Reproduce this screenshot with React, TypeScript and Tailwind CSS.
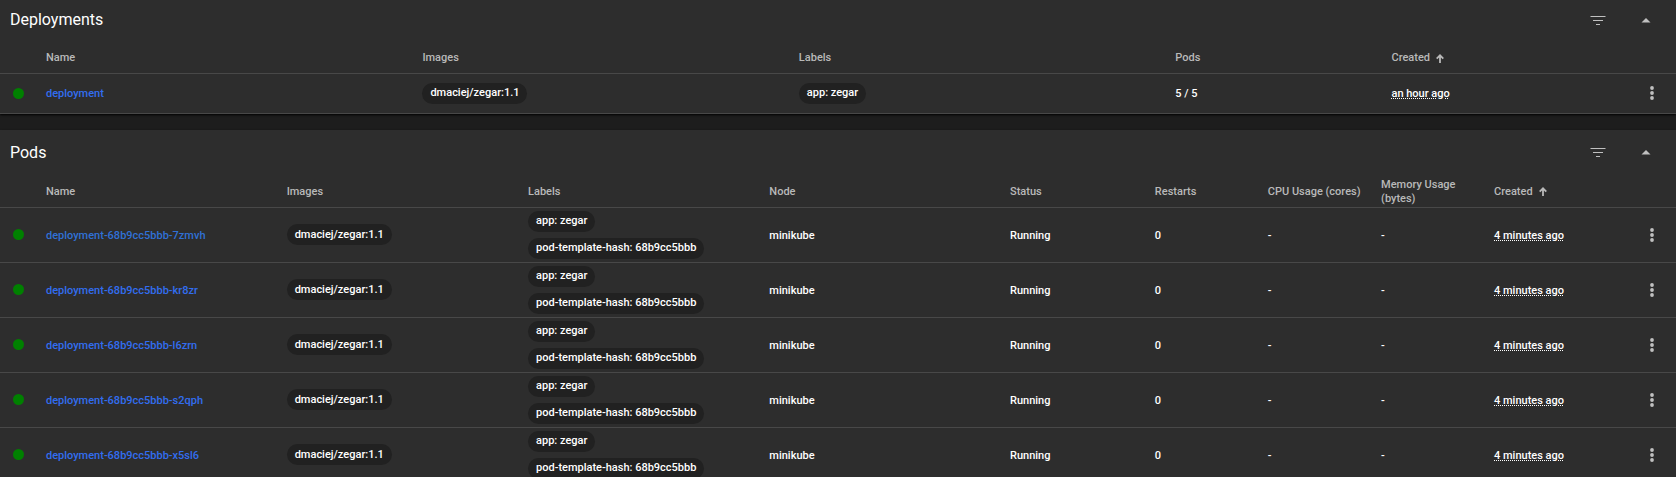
import type { ReactNode } from "react";

type Column = { label: string; width: string; sorted?: boolean };

const deploymentColumns: Column[] = [
  { label: "Name", width: "w-[22.46%]" },
  { label: "Images", width: "w-[22.46%]" },
  { label: "Labels", width: "w-[22.46%]" },
  { label: "Pods", width: "w-[12.9%]" },
  { label: "Created", width: "", sorted: true },
];

const podColumns: Column[] = [
  { label: "Name", width: "w-[14.36%]" },
  { label: "Images", width: "w-[14.4%]" },
  { label: "Labels", width: "w-[14.4%]" },
  { label: "Node", width: "w-[14.36%]" },
  { label: "Status", width: "w-[8.64%]" },
  { label: "Restarts", width: "w-[6.74%]" },
  { label: "CPU Usage (cores)", width: "w-[6.76%]" },
  { label: "Memory Usage (bytes)", width: "w-[6.74%]" },
  { label: "Created", width: "", sorted: true },
];

const pods = [
  { name: "deployment-68b9cc5bbb-7zmvh", visited: true },
  { name: "deployment-68b9cc5bbb-kr8zr" },
  { name: "deployment-68b9cc5bbb-l6zrn" },
  { name: "deployment-68b9cc5bbb-s2qph" },
  { name: "deployment-68b9cc5bbb-x5sl6" },
];

function FilterIcon() {
  return (
    <svg width="16" height="9" viewBox="0 0 16 9" fill="currentColor" aria-hidden="true">
      <rect x="0.5" y="0" width="15" height="1" />
      <rect x="3" y="4" width="10" height="1" />
      <rect x="6" y="8" width="4" height="1" />
    </svg>
  );
}

function CollapseIcon() {
  return (
    <svg width="10" height="5" viewBox="0 0 10 5" fill="currentColor" aria-hidden="true">
      <path d="M0.500 4.500 5 0l4.500 4.500z" />
    </svg>
  );
}

function SortArrow() {
  return (
    <svg width="8" height="9" viewBox="0 0 8 9" fill="none" stroke="currentColor" strokeWidth="1.800" aria-hidden="true">
      <path d="M4 9V1.500M0.700 4.600 4 1.300l3.300 3.300" />
    </svg>
  );
}

function MoreIcon() {
  return (
    <svg width="4" height="14" viewBox="0 0 4 14" fill="currentColor" aria-hidden="true">
      <circle cx="2" cy="2" r="1.900" />
      <circle cx="2" cy="7" r="1.900" />
      <circle cx="2" cy="12" r="1.900" />
    </svg>
  );
}

function Chip({ children }: { children: ReactNode }) {
  return (
    <span className="flex h-[21px] w-fit items-center rounded-full bg-[#212121] px-2 whitespace-nowrap">
      {children}
    </span>
  );
}

function TextCell({ children }: { children: ReactNode }) {
  return <td className="pt-[2px]">{children}</td>;
}

function Age({ children }: { children: ReactNode }) {
  return <span className="underline decoration-dotted decoration-1">{children}</span>;
}

function Card({ title, columns, children }: { title: string; columns: Column[]; children: ReactNode }) {
  return (
    <section className="bg-[#2d2d2d] shadow-[0_1px_2px_#000000]">
      <header className="flex h-11 items-center justify-between pt-[2px] pr-[25px] pl-[10px]">
        <h2 className="text-[16px]">{title}</h2>
        <div className="flex items-center gap-[35px] text-[#c0c0c0]">
          <button type="button" aria-label={`Filter ${title}`}>
            <FilterIcon />
          </button>
          <button type="button" aria-label={`Collapse ${title}`}>
            <CollapseIcon />
          </button>
        </div>
      </header>
      <table className="w-full table-fixed border-collapse text-left text-[11px] leading-[14px] font-medium">
        <colgroup>
          <col className="w-[46px]" />
          {columns.map((column) => (
            <col key={column.label} className={column.width} />
          ))}
          <col className="w-[48px]" />
        </colgroup>
        <thead>
          <tr className="h-8 border-b border-[#484848] text-[#b9b9b9]">
            <td />
            {columns.map((column) => (
              <th key={column.label} className="pt-[4px] pr-2 pb-px font-medium">
                {column.sorted ? (
                  <button type="button" className="flex items-center gap-[6px]">
                    {column.label}
                    <SortArrow />
                  </button>
                ) : (
                  column.label
                )}
              </th>
            ))}
            <td />
          </tr>
        </thead>
        <tbody>{children}</tbody>
      </table>
    </section>
  );
}

function Row({ name, visited, children }: { name: string; visited?: boolean; children: ReactNode }) {
  return (
    <tr className="h-10 border-b border-[#484848]">
      <td className="pl-[13px]">
        <div className="size-[11px] rounded-full bg-[#008000]" />
      </td>
      <TextCell>
        <a href="#" className={visited ? "text-[#3071d6]" : "text-[#326df0]"}>
          {name}
        </a>
      </TextCell>
      {children}
      <td className="pr-[22px]">
        <button type="button" aria-label={`Actions for ${name}`} className="ml-auto block text-[#c0c0c0]">
          <MoreIcon />
        </button>
      </td>
    </tr>
  );
}

export default function App() {
  return (
    <main className="h-screen overflow-hidden bg-[#1d1d1d] font-['Roboto',sans-serif] text-white">
      <div className="-mt-[3px] flex flex-col gap-4">
        <Card title="Deployments" columns={deploymentColumns}>
          <Row name="deployment">
            <td>
              <Chip>dmaciej/zegar:1.1</Chip>
            </td>
            <td>
              <Chip>app: zegar</Chip>
            </td>
            <TextCell>5 / 5</TextCell>
            <TextCell>
              <Age>an hour ago</Age>
            </TextCell>
          </Row>
        </Card>
        <Card title="Pods" columns={podColumns}>
          {pods.map((pod) => (
            <Row key={pod.name} name={pod.name} visited={pod.visited}>
              <td>
                <Chip>dmaciej/zegar:1.1</Chip>
              </td>
              <td>
                <div className="flex flex-col gap-[6px] py-[3px]">
                  <Chip>app: zegar</Chip>
                  <Chip>pod-template-hash: 68b9cc5bbb</Chip>
                </div>
              </td>
              <TextCell>minikube</TextCell>
              <TextCell>Running</TextCell>
              <TextCell>0</TextCell>
              <TextCell>-</TextCell>
              <TextCell>-</TextCell>
              <TextCell>
                <Age>4 minutes ago</Age>
              </TextCell>
            </Row>
          ))}
        </Card>
      </div>
    </main>
  );
}
